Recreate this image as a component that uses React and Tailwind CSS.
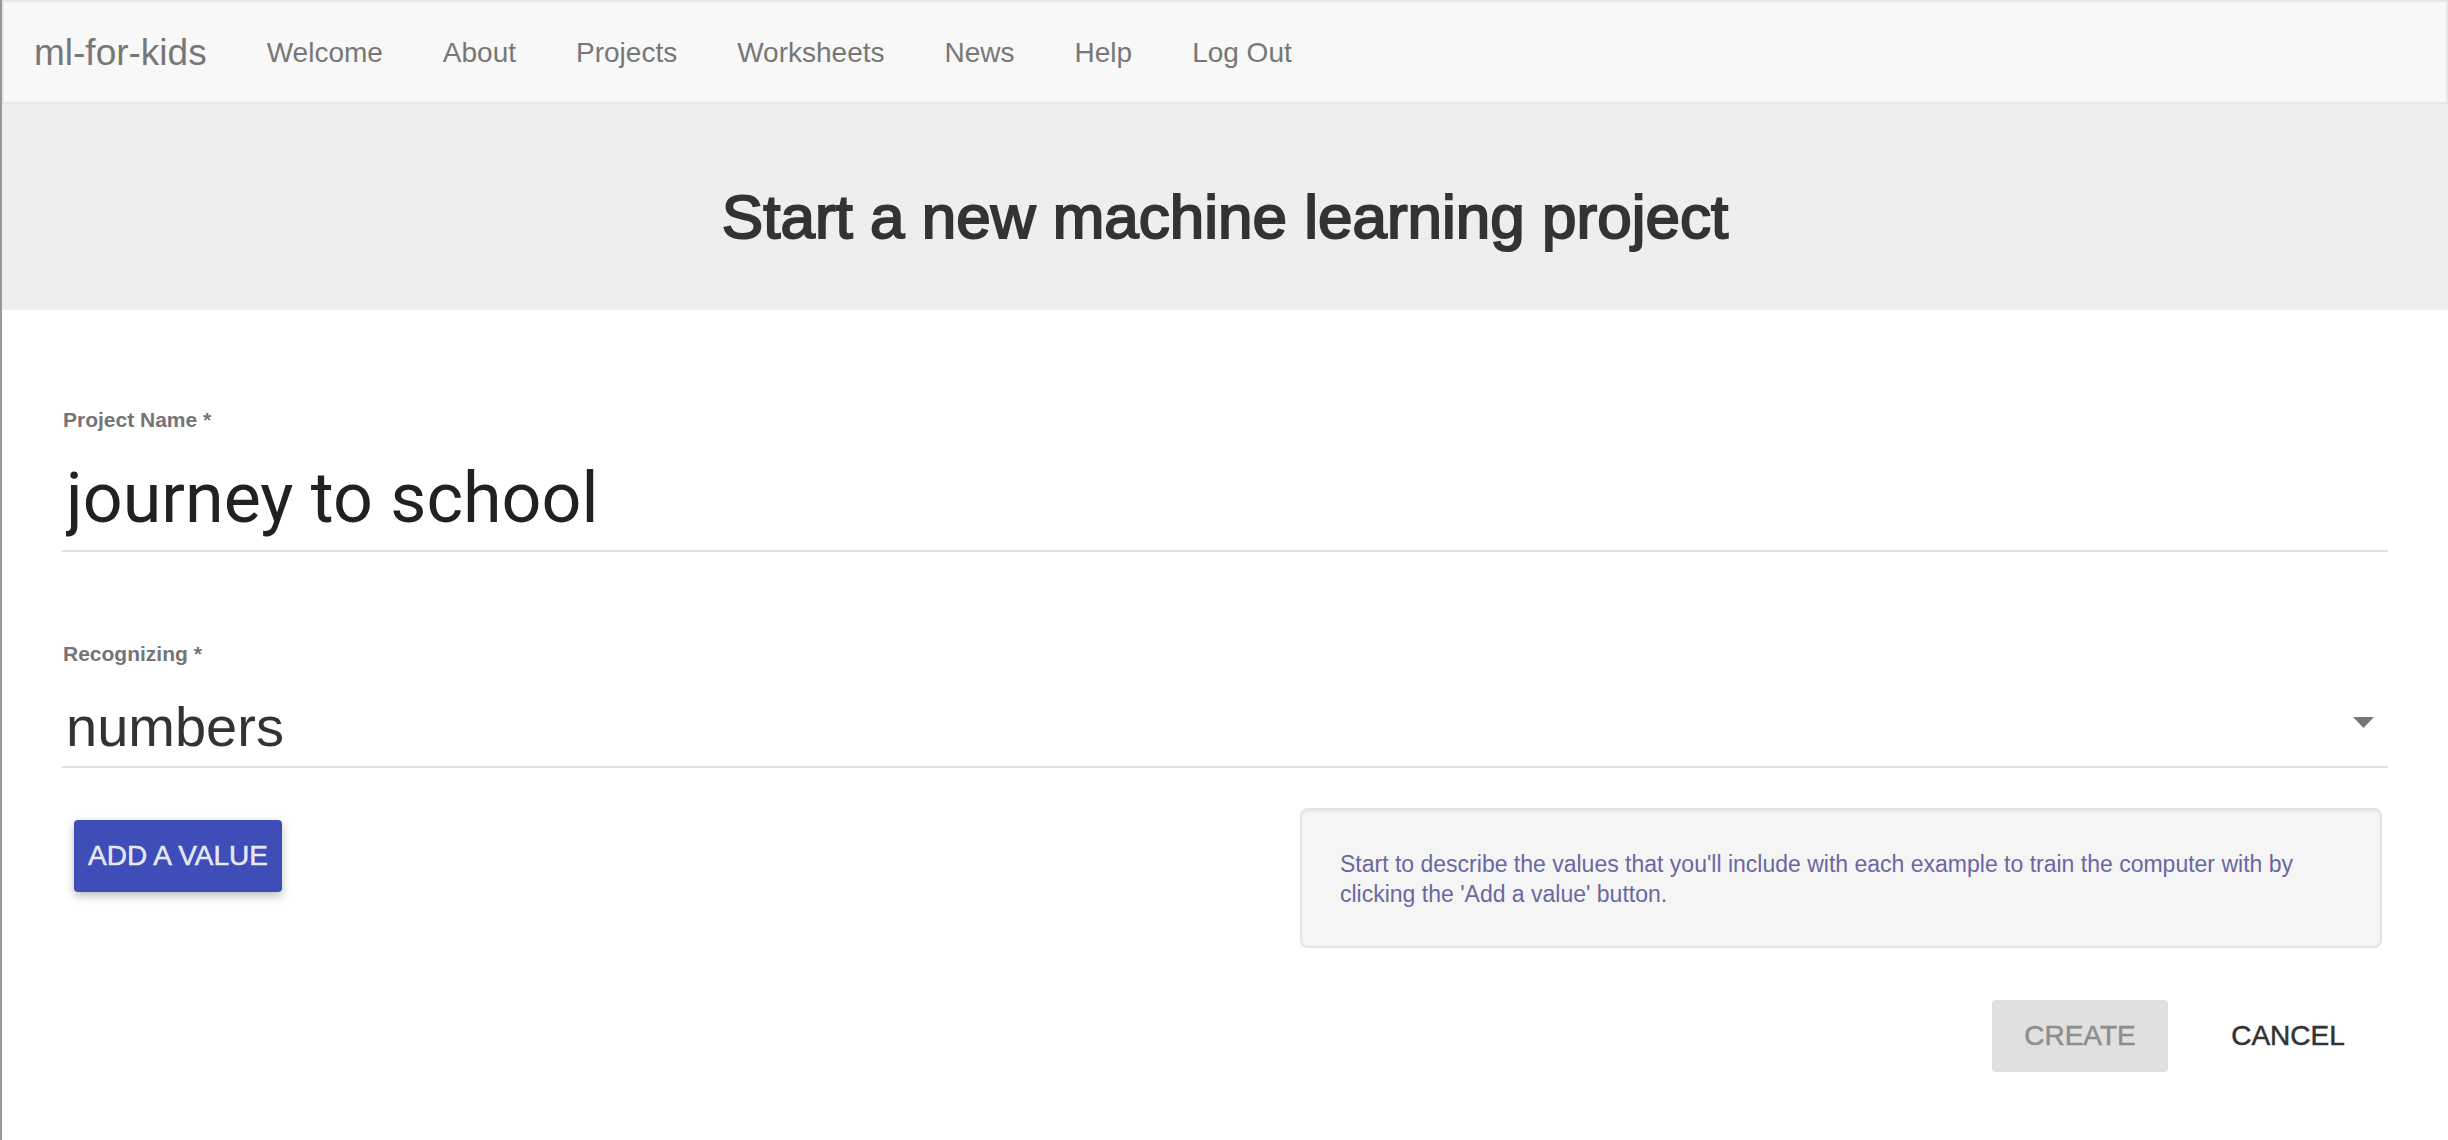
const links = ["Welcome", "About", "Projects", "Worksheets", "News", "Help", "Log Out"];

const fieldLabel = "pl-px text-[21px] leading-[24px] font-bold text-[#757575]";
const buttonBase =
  "h-[72px] rounded-[4px] text-[28px] leading-[36px] uppercase [-webkit-text-stroke:0.5px_currentColor]";

function Navbar() {
  return (
    <nav className="flex h-[104px] items-center border-2 border-[#e7e7e7] bg-[#f8f8f8] pt-[2px] text-[#777777]">
      <a href="#" className="px-[30px] text-[37px] leading-[40px]">
        ml-for-kids
      </a>
      <ul className="flex items-center">
        {links.map((label) => (
          <li key={label}>
            <a href="#" className="block px-[30px] text-[28px] leading-[40px]">
              {label}
            </a>
          </li>
        ))}
      </ul>
    </nav>
  );
}

export default function App() {
  return (
    <div className="min-h-screen border-l-2 border-[#979797] bg-white font-['Liberation_Sans',Arial,sans-serif] text-[#333333]">
      <Navbar />
      <header className="flex h-[206px] items-center justify-center bg-[#eeeeee]">
        <h1 className="pt-[20px] text-[62px] leading-[66px] [-webkit-text-stroke:2px_currentColor]">
          Start a new machine learning project
        </h1>
      </header>

      <form className="px-[60px] pt-[98px]" onSubmit={(e) => e.preventDefault()}>
        <div className="flex flex-col">
          <label htmlFor="project-name" className={fieldLabel}>
            Project Name *
          </label>
          <input
            id="project-name"
            type="text"
            defaultValue="journey to school"
            className="mt-[20px] h-[100px] w-full border-b-2 border-[#e0e0e0] bg-transparent px-[4px] pb-[6px] font-['Roboto',sans-serif] text-[70px] text-[#212121] outline-none"
          />
        </div>

        <div className="mt-[90px] flex flex-col">
          <label htmlFor="recognizing" className={fieldLabel}>
            Recognizing *
          </label>
          <div className="relative mt-[20px]">
            <select
              id="recognizing"
              defaultValue="numbers"
              className="h-[82px] w-full appearance-none border-b-2 border-[#e0e0e0] bg-transparent px-[4px] pt-[2px] text-[56px] leading-[64px] outline-none"
            >
              <option value="text">text</option>
              <option value="images">images</option>
              <option value="numbers">numbers</option>
            </select>
            <svg
              className="pointer-events-none absolute right-[14px] top-[31px] h-[11px] w-[21px]"
              viewBox="0 0 21 11"
              fill="#757575"
              aria-hidden="true"
            >
              <path d="M0 0h21L10.500 11z" />
            </svg>
          </div>
        </div>

        <div className="mt-[40px] grid grid-cols-2 items-start pr-[6px]">
          <button
            type="button"
            className={`${buttonBase} ml-[12px] mt-[12px] min-w-[208px] justify-self-start bg-[#3f4db8] px-[12px] text-white/87 shadow-[0_4px_10px_rgba(0,0,0,0.26)]`}
          >
            Add a value
          </button>
          <div className="ml-[78px] rounded-[8px] border-2 border-[#e3e3e3] bg-[#f5f5f5] pt-[39px] pr-[38px] pb-[37px] pl-[38px] text-[23px] leading-[30px] text-[#6a67a3] shadow-[inset_0_2px_2px_rgba(0,0,0,0.05)]">
            Start to describe the values that you'll include with each example to train the computer with by
            clicking the 'Add a value' button.
          </div>
        </div>

        <div className="mt-[52px] flex justify-end gap-[32px] pr-[12px]">
          <button type="submit" disabled className={`${buttonBase} w-[176px] bg-[#e0e0e0] text-[#8e8e8e]`}>
            Create
          </button>
          <button type="button" className={`${buttonBase} w-[176px]`}>
            Cancel
          </button>
        </div>
      </form>
    </div>
  );
}
